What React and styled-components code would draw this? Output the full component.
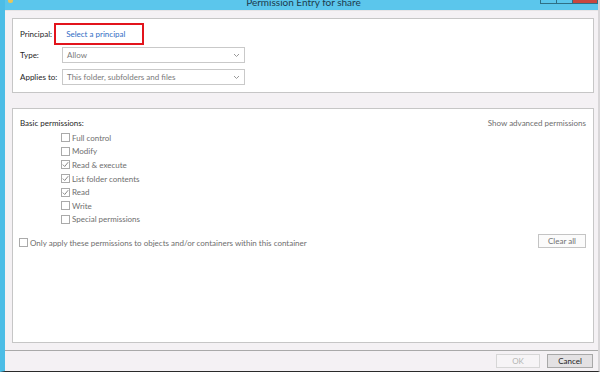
import styled, { createGlobalStyle } from "styled-components";

const GlobalStyle = createGlobalStyle`
  html, body {
    margin: 0;
    padding: 0;
    background: #f4f1f4;
  }
  * {
    box-sizing: border-box;
  }
`;

const permissions = [
  { label: "Full control", checked: false },
  { label: "Modify", checked: false },
  { label: "Read & execute", checked: true },
  { label: "List folder contents", checked: true },
  { label: "Read", checked: true },
  { label: "Write", checked: false },
  { label: "Special permissions", checked: false },
];

const Check = ({ checked }) => (
  <CheckBox>
    {checked && (
      <svg width="7" height="7" viewBox="0 0 7 7">
        <path d="M0.8 3.6 L2.7 5.5 L6.2 1.2" fill="none" stroke="#8a8a8a" strokeWidth="1" />
      </svg>
    )}
  </CheckBox>
);

const Chevron = () => (
  <svg width="7" height="5" viewBox="0 0 7 5">
    <path d="M1 1 L3.5 3.5 L6 1" fill="none" stroke="#9a9a9a" strokeWidth="1" />
  </svg>
);

const App = () => {
  return (
    <>
      <GlobalStyle />
      <Frame>
        <TitleBar>
          <AppIcon />
          <Title>Permission Entry for share</Title>
          <Controls>
            <WinButton />
            <WinButton />
            <WinButton close />
          </Controls>
        </TitleBar>
        <Content>
          <TopPanel>
            <PrincipalRow>
              <Label>Principal:</Label>
              <Highlight>
                <Link>Select a principal</Link>
              </Highlight>
            </PrincipalRow>
            <FieldRow>
              <FieldLabel>Type:</FieldLabel>
              <Select>
                <span>Allow</span>
                <Chevron />
              </Select>
            </FieldRow>
            <FieldRow top={6}>
              <FieldLabel>Applies to:</FieldLabel>
              <Select>
                <span>This folder, subfolders and files</span>
                <Chevron />
              </Select>
            </FieldRow>
          </TopPanel>
          <PermPanel>
            <PermHeader>
              <Label>Basic permissions:</Label>
              <Muted>Show advanced permissions</Muted>
            </PermHeader>
            <PermList>
              {permissions.map((p) => (
                <PermRow key={p.label}>
                  <Check checked={p.checked} />
                  <Muted>{p.label}</Muted>
                </PermRow>
              ))}
            </PermList>
            <ApplyRow>
              <PermRow>
                <Check />
                <Muted>Only apply these permissions to objects and/or containers within this container</Muted>
              </PermRow>
              <Button raise>Clear all</Button>
            </ApplyRow>
          </PermPanel>
        </Content>
        <Footer>
          <Button disabled wide={44}>OK</Button>
          <Button primary wide={46}>Cancel</Button>
        </Footer>
      </Frame>
    </>
  );
};

const Frame = styled.div`
  width: 600px;
  height: 372px;
  display: flex;
  flex-direction: column;
  background: #f4f1f4;
  border-left: 5px solid #4cbde6;
  border-right: 2px solid #d8d6d8;
  border-bottom: 1px solid #2a2a2a;
  font-family: Lato, "Open Sans", sans-serif;
  font-size: 8px;
  color: #1e1e1e;
  overflow: hidden;
`;

const TitleBar = styled.div`
  height: 10px;
  flex-shrink: 0;
  background: #5bc6ec;
  display: grid;
  grid-template-columns: 1fr auto 1fr;
  align-items: start;
  overflow: hidden;
`;

const AppIcon = styled.div`
  width: 5px;
  height: 3px;
  margin-left: 3px;
  background: #e8c65a;
  border-radius: 0 0 2px 2px;
`;

const Title = styled.div`
  font-size: 10px;
  line-height: 12px;
  margin-top: -4px;
  margin-left: 4px;
  color: #1d3b4c;
  white-space: nowrap;
`;

const Controls = styled.div`
  justify-self: end;
  display: flex;
`;

const WinButton = styled.div`
  width: ${(p) => (p.close ? "26px" : "17px")};
  height: 4px;
  background: ${(p) => (p.close ? "#c8463e" : "#5bc6ec")};
  border: 1px solid #2e6f86;
  border-top: none;
  margin-left: -1px;
`;

const Content = styled.div`
  flex: 1;
  display: flex;
  flex-direction: column;
  padding: 7px 4px 7px 7px;
  border-top: 1px solid #e6e4e6;
  border-bottom: 1px solid #a9a9a9;
`;

const Panel = styled.div`
  background: #ffffff;
  border: 1px solid #c6c6c6;
`;

const TopPanel = styled(Panel)`
  height: 75px;
  padding: 4px 7px 0 7px;
  display: flex;
  flex-direction: column;
`;

const PermPanel = styled(Panel)`
  flex: 1;
  margin-top: 15px;
  padding: 8px 7px 0 7px;
  display: flex;
  flex-direction: column;
`;

const Label = styled.span`
  color: #1e1e1e;
  white-space: nowrap;
`;

const Muted = styled.span`
  color: #6e6e6e;
  white-space: nowrap;
`;

const PrincipalRow = styled.div`
  display: flex;
  align-items: center;
  height: 22px;
`;

const Highlight = styled.div`
  height: 22px;
  width: 90px;
  margin-left: 2px;
  border: 2px solid #e2141c;
  display: flex;
  align-items: center;
  padding-left: 10px;
`;

const Link = styled.span`
  color: #2f6cc4;
  white-space: nowrap;
`;

const FieldRow = styled.div`
  display: flex;
  align-items: center;
  margin-top: ${(p) => (p.top ? p.top : 2)}px;
`;

const FieldLabel = styled(Label)`
  width: 42px;
`;

const Select = styled.div`
  width: 183px;
  height: 16px;
  border: 1px solid #c9c9c9;
  background: #fff;
  color: #7a7a7a;
  display: flex;
  align-items: center;
  justify-content: space-between;
  padding: 0 4px 0 4px;
  white-space: nowrap;
`;

const PermHeader = styled.div`
  display: flex;
  justify-content: space-between;
  align-items: center;
  height: 12px;
`;

const PermList = styled.div`
  display: flex;
  flex-direction: column;
  margin-top: 2px;
  padding-left: 41px;
`;

const PermRow = styled.div`
  display: flex;
  align-items: center;
  gap: 2px;
  height: 13.6px;
`;

const CheckBox = styled.span`
  width: 9px;
  height: 9px;
  border: 1px solid #aaaaaa;
  background: #fff;
  display: inline-flex;
  align-items: center;
  justify-content: center;
  flex-shrink: 0;
`;

const ApplyRow = styled.div`
  display: flex;
  justify-content: space-between;
  align-items: center;
  margin-top: 8px;
  margin-left: -1px;
`;

const Button = styled.div`
  width: ${(p) => (p.wide ? p.wide : 48)}px;
  height: 14px;
  margin-bottom: ${(p) => (p.raise ? 3 : 0)}px;
  display: flex;
  align-items: center;
  justify-content: center;
  border: 1px solid ${(p) => (p.primary ? "#a8a8a8" : p.disabled ? "#d6d6d6" : "#c4c4c4")};
  background: ${(p) => (p.primary ? "#e3e1e3" : p.disabled ? "#f6f4f6" : "#fbfbfb")};
  color: ${(p) => (p.disabled ? "#b4b4b4" : p.primary ? "#222" : "#707070")};
`;

const Footer = styled.div`
  height: 20px;
  flex-shrink: 0;
  display: flex;
  justify-content: flex-end;
  align-items: center;
  gap: 7px;
  padding: 0 5px 0 0;
`;

export default App;
